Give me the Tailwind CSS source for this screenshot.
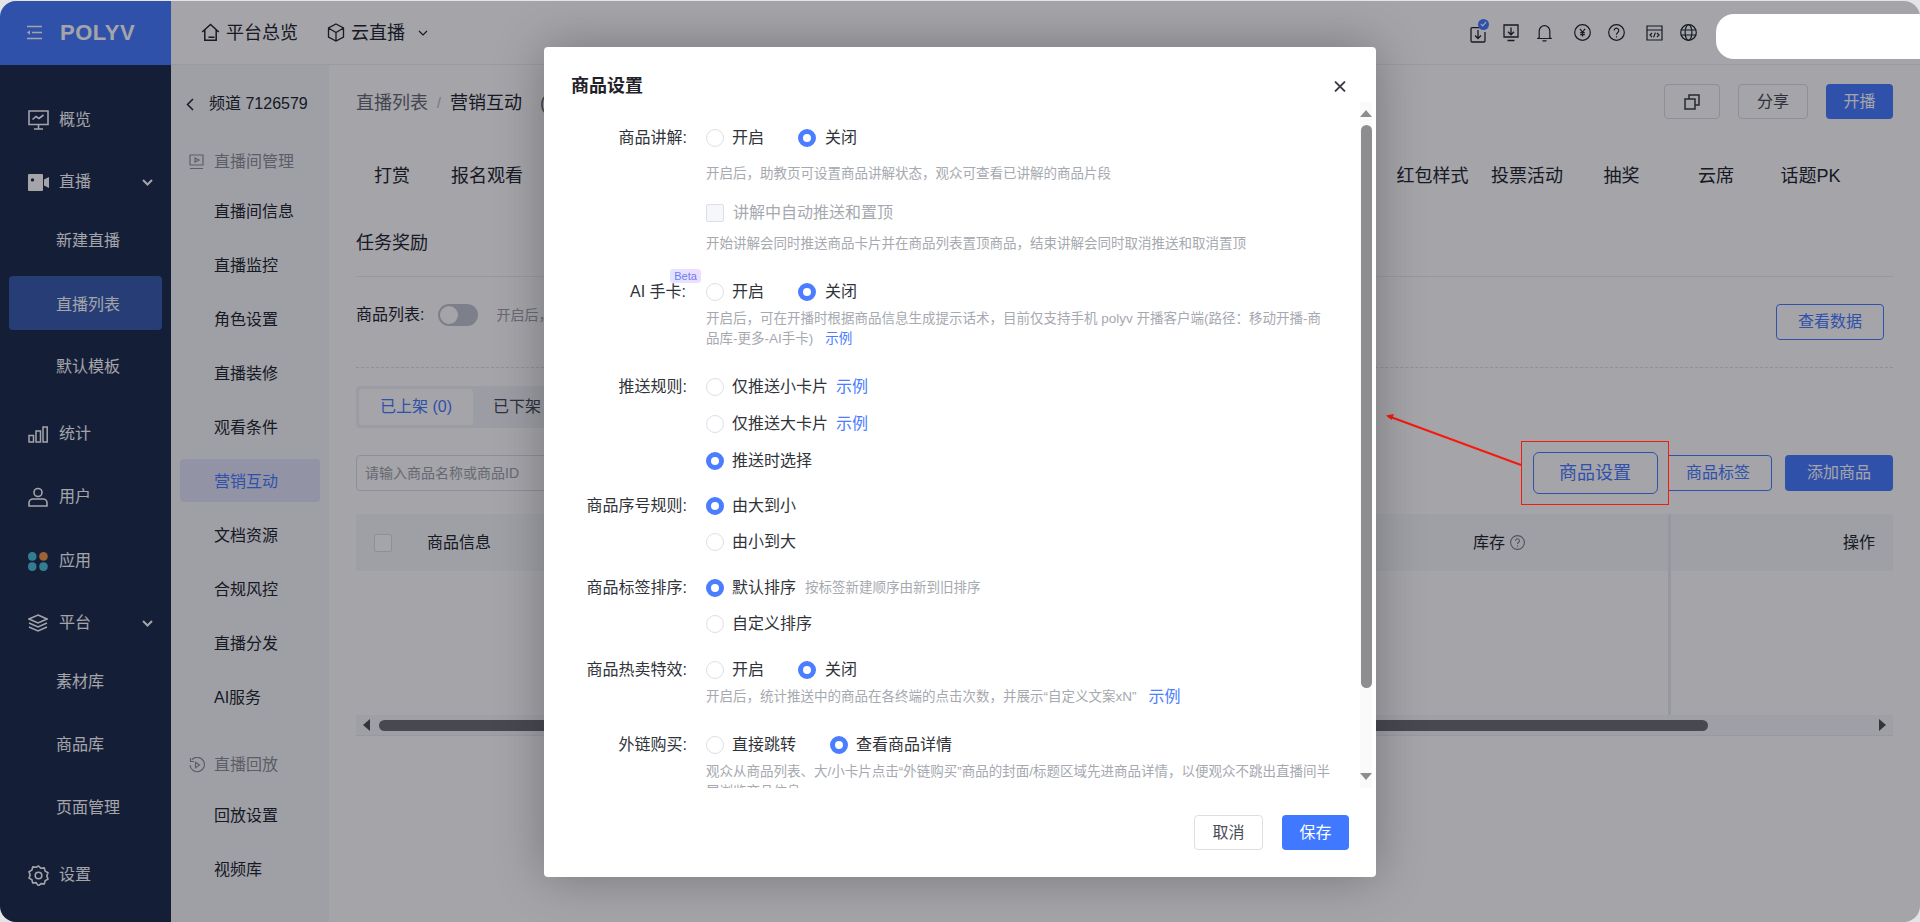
<!DOCTYPE html>
<html lang="zh-CN">
<head>
<meta charset="UTF-8">
<title>商品设置</title>
<script src="https://cdn.jsdelivr.net/npm/@tailwindcss/browser@4"></script>
</head>
<body class="bg-[#e4e4e6] overflow-hidden [font-family:'Liberation_Sans','Noto_Sans_CJK_SC',sans-serif]">
<div class="relative w-[1920px] h-[921px] mt-px overflow-hidden rounded-[16px] bg-white text-[#25282e] flex flex-col">

  <!-- 顶栏 -->
  <header class="h-[64px] shrink-0 flex items-center border-b border-[#f0f1f3]">
    <div class="w-[171px] h-[64px] bg-[#4a7dff] flex items-center pl-[26px] text-white">
      <svg class="w-[17px] h-[15px]" viewBox="0 0 17 15" fill="none" stroke="currentColor" stroke-width="1.6"><path d="M1 1.5h15M6 7.5h10M1 13.5h15"/><path d="M4 5.2 1 7.5l3 2.3z" fill="currentColor" stroke="none"/></svg>
      <span class="ml-[17px] text-[22px] leading-none font-bold tracking-[0.5px]">POLYV</span>
    </div>
    <div class="flex items-center pl-[30px] text-[18px] leading-[24px]">
      <svg class="w-[19px] h-[19px] mr-[6px]" viewBox="0 0 19 19" fill="none" stroke="#25282e" stroke-width="1.5"><path d="M1.2 9 9.5 1.5 17.8 9M3.8 7v10.3h11.4V7M7.5 14.3h6"/></svg>
      <span>平台总览</span>
      <svg class="w-[18px] h-[19px] ml-[29px] mr-[6px]" viewBox="0 0 18 19" fill="none" stroke="#25282e" stroke-width="1.3"><path d="M9 1 16.5 5v9L9 18 1.5 14V5zM1.5 5 9 9.5 16.5 5M9 9.5V18"/></svg>
      <span>云直播</span>
      <svg class="w-[10px] h-[6px] ml-[13px]" viewBox="0 0 10 6" fill="none" stroke="#25282e" stroke-width="1.2"><path d="m1 1 4 4 4-4"/></svg>
    </div>
    <div class="ml-auto mr-[223px] flex items-center text-[#25282e]">
      <span class="relative w-[16px] h-[18px] mt-[2px]">
        <svg class="w-[16px] h-[18px]" viewBox="0 0 16 18" fill="none" stroke="currentColor" stroke-width="1.3"><path d="M10 2.6H2.2a1.2 1.2 0 0 0-1.2 1.2v12a1.2 1.2 0 0 0 1.2 1.2h11.6a1.2 1.2 0 0 0 1.2-1.2V7M8 5v8M5 10.5 8 13.5l3-3"/></svg>
        <span class="absolute -top-[6px] left-[8px] w-[11px] h-[11px] rounded-full bg-[#4a7dff] flex items-center justify-center">
          <svg class="w-[7px] h-[6px]" viewBox="0 0 7 6" fill="none" stroke="#fff" stroke-width="1.2"><path d="m1 3 1.8 1.8L6 1"/></svg>
        </span>
      </span>
      <svg class="w-[16px] h-[18px] ml-[17px]" viewBox="0 0 16 18" fill="none" stroke="currentColor" stroke-width="1.3"><path d="M1 1h14v12H1zM4.5 16.5h7M8 3.5v7M5 7.8l3 3 3-3"/></svg>
      <svg class="w-[15px] h-[18px] ml-[18px]" viewBox="0 0 15 18" fill="none" stroke="currentColor" stroke-width="1.2"><path d="M2.2 13.5V7a5.3 5.3 0 0 1 10.6 0v6.5l1.3 1H.9zM5.5 16.8h4"/></svg>
      <svg class="w-[17px] h-[17px] ml-[22px]" viewBox="0 0 17 17" fill="none" stroke="currentColor" stroke-width="1.2"><circle cx="8.5" cy="8.5" r="7.8"/><path d="m6 4.8 2.5 3.5L11 4.8M8.5 8.3v4.2M6.2 8.7h4.6M6.2 10.7h4.6"/></svg>
      <svg class="w-[17px] h-[17px] ml-[17px]" viewBox="0 0 17 17" fill="none" stroke="currentColor" stroke-width="1.2"><circle cx="8.5" cy="8.5" r="7.8"/><path d="M6.2 6.5a2.3 2.3 0 1 1 3.6 1.9c-.9.6-1.3 1-1.3 2v.4M8.5 12.3v1.3"/></svg>
      <svg class="w-[17px] h-[16px] ml-[21px]" viewBox="0 0 17 16" fill="none" stroke="currentColor" stroke-width="1.2"><path d="M1 1h15v14H1zM1 5h15M6 8 4 10l2 2M11 8l2 2-2 2M9.4 7.6 7.6 12.4"/></svg>
      <svg class="w-[17px] h-[17px] ml-[17px]" viewBox="0 0 17 17" fill="none" stroke="currentColor" stroke-width="1.2"><circle cx="8.5" cy="8.5" r="7.8"/><ellipse cx="8.5" cy="8.5" rx="3.4" ry="7.8"/><path d="M.7 6h15.6M.7 11h15.6"/></svg>
    </div>
  </header>

  <div class="flex-1 flex min-h-0">
    <!-- 主导航 -->
    <nav class="w-[171px] shrink-0 bg-[#1e2e4e] text-white text-[16px] pt-[26px] px-[9px]">
      <div class="h-[54px] pt-[4px] flex items-center pl-[19px]">
        <svg class="w-[21px] h-[20px] mr-[10px]" viewBox="0 0 21 20" fill="none" stroke="currentColor" stroke-width="1.6"><path d="M1 1h19v13.5H1zM10.5 14.5V19M6 19h9M4.5 9.5l3.5-3 3 2 4.5-3.5"/></svg><span>概览</span>
      </div>
      <div class="h-[54px] pt-[4px] mt-[8px] flex items-center pl-[19px]">
        <svg class="w-[21px] h-[17px] mr-[10px]" viewBox="0 0 21 17" fill="currentColor"><path d="M1 0h13a1 1 0 0 1 1 1v15a1 1 0 0 1-1 1H1a1 1 0 0 1-1-1V1a1 1 0 0 1 1-1zm3.5 4.2a1.7 1.7 0 1 0 0 3.4 1.7 1.7 0 0 0 0-3.4zM16 5.5l5-2.5v11l-5-2.500z"/></svg><span>直播</span>
        <svg class="w-[11px] h-[7px] ml-auto mr-[9px]" viewBox="0 0 11 7" fill="none" stroke="currentColor" stroke-width="2"><path d="m1 1 4.500 4.500L10 1"/></svg>
      </div>
      <div class="h-[54px] pt-[4px] mt-[5px] flex items-center pl-[47px]">新建直播</div>
      <div class="h-[54px] pt-[4px] mt-[10px] flex items-center pl-[47px] rounded-[4px] bg-[#3a5fb0]">直播列表</div>
      <div class="h-[54px] pt-[4px] mt-[8px] flex items-center pl-[47px]">默认模板</div>
      <div class="h-[54px] pt-[4px] mt-[13px] flex items-center pl-[19px]">
        <svg class="w-[20px] h-[17px] mr-[11px]" viewBox="0 0 20 17" fill="none" stroke="currentColor" stroke-width="1.5"><path d="M1 9.500h4.500V16H1zM8 5h4.500v11H8zM15 1h4.200v15H15z"/></svg><span>统计</span>
      </div>
      <div class="h-[54px] pt-[4px] mt-[9px] flex items-center pl-[19px]">
        <svg class="w-[20px] h-[20px] mr-[11px]" viewBox="0 0 20 20" fill="none" stroke="currentColor" stroke-width="1.600"><circle cx="10" cy="5.500" r="4"/><path d="M1 19v-3a4 4 0 0 1 4-4h10a4 4 0 0 1 4 4v3z"/></svg><span>用户</span>
      </div>
      <div class="h-[54px] pt-[4px] mt-[10px] flex items-center pl-[19px]">
        <svg class="w-[20px] h-[19px] mr-[11px]" viewBox="0 0 20 19"><path d="M0 4.500A4.200 4.200 0 0 1 4.200 0 4.200 4.200 0 0 1 8.500 4.500c0 2.800-1.500 4.300-4.300 4.300C1.500 8.800 0 7.300 0 4.500z" fill="#4fc3dd"/><circle cx="15.500" cy="4.400" r="4.300" fill="#f29a4a"/><path d="M0 14.500c0-2.800 1.500-4.300 4.200-4.300 2.800 0 4.300 1.500 4.300 4.300S7 19 4.200 19C1.500 19 0 17.300 0 14.500zM11.200 14.500c0-2.800 1.500-4.300 4.300-4.300 2.700 0 4.300 1.500 4.300 4.300S18.200 19 15.500 19c-2.800 0-4.300-1.700-4.300-4.500z" fill="#4fc3dd"/></svg><span>应用</span>
      </div>
      <div class="h-[54px] pt-[4px] mt-[8px] flex items-center pl-[19px]">
        <svg class="w-[20px] h-[18px] mr-[11px]" viewBox="0 0 20 18" fill="none" stroke="currentColor" stroke-width="1.500"><path d="M10 1 19 5l-9 4-9-4zM1 9l9 4 9-4M1 13l9 4 9-4"/></svg><span>平台</span>
        <svg class="w-[11px] h-[7px] ml-auto mr-[9px]" viewBox="0 0 11 7" fill="none" stroke="currentColor" stroke-width="2"><path d="m1 1 4.500 4.500L10 1"/></svg>
      </div>
      <div class="h-[54px] pt-[4px] mt-[5px] flex items-center pl-[47px]">素材库</div>
      <div class="h-[54px] pt-[4px] mt-[9px] flex items-center pl-[47px]">商品库</div>
      <div class="h-[54px] pt-[4px] mt-[9px] flex items-center pl-[47px]">页面管理</div>
      <div class="h-[54px] pt-[4px] mt-[13px] flex items-center pl-[19px]">
        <svg class="w-[21px] h-[21px] mr-[10px]" viewBox="0 0 21 21" fill="none" stroke="currentColor" stroke-width="1.600"><path d="M10.500 1 13 3.300l3.300-.4.800 3.200 2.900 1.700-1.200 3.200 1.200 3.100-2.900 1.700-.8 3.200-3.300-.4-2.500 2.300L8 17.600l-3.300.4-.8-3.200L1 13.100l1.200-3.100L1 6.800l2.900-1.700.8-3.200 3.300.4z" stroke-linejoin="round"/><circle cx="10.500" cy="10.500" r="3.300"/></svg><span>设置</span>
      </div>
    </nav>

    <!-- 频道导航 -->
    <aside class="w-[158px] shrink-0 bg-[#f8f9fb] text-[16px] pt-[16px] px-[9px]">
      <div class="h-[40px] pt-[6px] flex items-center">
        <svg class="w-[8px] h-[13px] ml-[6px]" viewBox="0 0 8 13" fill="none" stroke="#25282e" stroke-width="1.500"><path d="M7 1 1.500 6.500 7 12"/></svg>
        <span class="ml-[15px]">频道 7126579</span>
      </div>
      <div class="h-[43px] pt-[2px] mt-[18px] flex items-center text-[#8f9298]">
        <svg class="w-[15px] h-[16px] ml-[9px] mr-[10px]" viewBox="0 0 15 16" fill="none" stroke="currentColor" stroke-width="1.200"><path d="M1 1h13v10H1zM1 14.500h13M6 4l4 2-4 2z"/></svg><span>直播间管理</span>
      </div>
      <div class="h-[43px] pt-[2px] mt-[7px] flex items-center pl-[34px]">直播间信息</div>
      <div class="h-[43px] pt-[2px] mt-[11px] flex items-center pl-[34px]">直播监控</div>
      <div class="h-[43px] pt-[2px] mt-[11px] flex items-center pl-[34px]">角色设置</div>
      <div class="h-[43px] pt-[2px] mt-[11px] flex items-center pl-[34px]">直播装修</div>
      <div class="h-[43px] pt-[2px] mt-[11px] flex items-center pl-[34px]">观看条件</div>
      <div class="h-[43px] pt-[2px] mt-[11px] flex items-center pl-[34px] rounded-[4px] bg-[#e3e7f9] text-[#4a7dff]">营销互动</div>
      <div class="h-[43px] pt-[2px] mt-[11px] flex items-center pl-[34px]">文档资源</div>
      <div class="h-[43px] pt-[2px] mt-[11px] flex items-center pl-[34px]">合规风控</div>
      <div class="h-[43px] pt-[2px] mt-[11px] flex items-center pl-[34px]">直播分发</div>
      <div class="h-[43px] pt-[2px] mt-[11px] flex items-center pl-[34px]">AI服务</div>
      <div class="h-[43px] pt-[2px] mt-[24px] flex items-center text-[#8f9298]">
        <svg class="w-[16px] h-[16px] ml-[9px] mr-[9px]" viewBox="0 0 16 16" fill="none" stroke="currentColor" stroke-width="1.200"><path d="M3 2.500A7.200 7.200 0 1 1 1 8M1.500 1v3.500H5M6.500 5.300l4 2.700-4 2.700z"/></svg><span>直播回放</span>
      </div>
      <div class="h-[43px] pt-[2px] mt-[8px] flex items-center pl-[34px]">回放设置</div>
      <div class="h-[43px] pt-[2px] mt-[11px] flex items-center pl-[34px]">视频库</div>
    </aside>

    <!-- 内容区 -->
    <main class="flex-1 min-w-0 px-[27px]">
      <div class="h-[73px] flex items-center justify-between text-[18px]">
        <div class="flex items-center mt-[3px]">
          <span class="text-[#6a6d73]">直播列表</span>
          <span class="mx-[9px] text-[14px] text-[#b5b8be]">/</span>
          <span>营销互动</span>
          <span class="ml-[18px] text-[#6a6d73]">(</span>
        </div>
        <div class="flex items-center text-[16px]">
          <button class="w-[56px] h-[35px] rounded-[4px] border border-[#dcdfe6] flex items-center justify-center">
            <svg class="w-[16px] h-[16px]" viewBox="0 0 16 16" fill="none" stroke="#3c3f46" stroke-width="1.500"><path d="M1 5h10v10H1zM5 5V1h10v10h-4"/></svg>
          </button>
          <button class="ml-[18px] w-[70px] h-[35px] rounded-[4px] border border-[#dcdfe6] text-[#4a4d53]">分享</button>
          <button class="ml-[18px] w-[67px] h-[35px] rounded-[4px] bg-[#4a7dff] text-white">开播</button>
        </div>
      </div>

      <div class="-ml-[11px] mt-[18px] h-[40px] flex items-center text-[18px]">
        <span class="w-[94px] text-center">打赏</span>
        <span class="w-[96px] text-center">报名观看</span>
        <span class="w-[850px]"></span>
        <span class="w-[95px] text-center">红包样式</span>
        <span class="w-[94px] text-center">投票活动</span>
        <span class="w-[95px] text-center">抽奖</span>
        <span class="w-[94px] text-center">云席</span>
        <span class="w-[95px] text-center">话题PK</span>
      </div>
      <div class="mt-[27px] h-[40px] flex items-center text-[18px]">任务奖励</div>
      <div class="mt-[13px] border-b border-[#eceef1]"></div>

      <div class="pt-[27px] flex items-start justify-between">
        <div class="h-[22px] flex items-center text-[16px]">
          <span>商品列表:</span>
          <span class="ml-[14px] w-[40px] h-[22px] rounded-full bg-[#c3c7cf] p-[2px]"><span class="block w-[18px] h-[18px] rounded-full bg-white"></span></span>
          <span class="ml-[18px] text-[14px] text-[#a0a3a9]">开启后，观众可在观看页查看商品列表并进行购买</span>
        </div>
        <button class="mr-[9px] w-[108px] h-[36px] rounded-[4px] border border-[#4a7dff] text-[16px] text-[#4a7dff]">查看数据</button>
      </div>

      <div class="mt-[27px] border-b border-dashed border-[#dfe1e5]"></div>

      <div class="mt-[18px] w-[260px] h-[42px] rounded-[4px] bg-[#f3f4f7] p-[3px] flex items-center text-[16px]">
        <span class="w-[114px] h-[36px] rounded-[4px] bg-white text-[#4a7dff] flex items-center justify-center">已上架 (0)</span>
        <span class="ml-[20px] text-[#4a4d53]">已下架 (0)</span>
      </div>

      <div class="mt-[27px] h-[36px] flex items-center justify-between">
        <div class="w-[240px] h-[36px] rounded-[4px] border border-[#dcdfe6] pl-[8px] flex items-center text-[14px] text-[#a0a3a9]">请输入商品名称或商品ID</div>
        <div class="flex items-center text-[16px]">
          <button class="w-[108px] h-[36px] rounded-[4px] border border-[#4a7dff] text-[#4a7dff]">商品标签</button>
          <button class="ml-[13px] w-[108px] h-[36px] rounded-[4px] bg-[#4a7dff] text-white">添加商品</button>
        </div>
      </div>

      <div class="mt-[23px] h-[201px] flex text-[16px]">
        <div class="flex-1 h-[57px] bg-[#f8f9fa] flex items-center">
          <span class="ml-[18px] w-[18px] h-[18px] rounded-[2px] border border-[#dcdfe6] bg-white"></span>
          <span class="ml-[35px]">商品信息</span>
          <span class="ml-auto">库存</span>
          <svg class="ml-[5px] mr-[143px] w-[15px] h-[15px]" viewBox="0 0 15 15" fill="none" stroke="#7d8087" stroke-width="1.100"><circle cx="7.500" cy="7.500" r="6.900"/><path d="M5.500 5.800a2 2 0 1 1 3 1.700c-.7.400-1 .7-1 1.500M7.500 10.300v1.200"/></svg>
        </div>
        <div class="w-[225px] border-l-[3px] border-[#eaecf3]">
          <div class="h-[57px] bg-[#f8f9fa] flex items-center justify-end pr-[18px]">操作</div>
        </div>
      </div>
      <div class="h-[21px] border-b border-[#eceef1] bg-[#f8f9fa] flex items-center">
        <span class="ml-[7px] w-0 h-0 border-y-[6px] border-y-transparent border-r-[7px] border-r-[#505050]"></span>
        <span class="ml-[9px] w-[1329px] h-[11px] rounded-full bg-[#707074]"></span>
        <span class="ml-auto mr-[7px] w-0 h-0 border-y-[6px] border-y-transparent border-l-[7px] border-l-[#505050]"></span>
      </div>
    </main>
  </div>

  <!-- 被标注的按钮 -->
  <div class="absolute left-[1521px] top-[440px] w-[148px] h-[64px] bg-white flex items-center justify-center">
    <button class="w-[125px] h-[42px] rounded-[6px] border border-[#4a7dff] text-[18px] text-[#4a7dff]">商品设置</button>
  </div>

  <!-- 遮罩 -->
  <div class="absolute inset-0 bg-[rgba(2,4,16,0.36)]"></div>

  <!-- 标注 -->
  <div class="absolute left-[1521px] top-[440px] w-[148px] h-[64px] border border-[#f5190f]"></div>
  <svg class="absolute left-[1380px] top-[405px] w-[145px] h-[65px]" viewBox="0 0 145 65" fill="none"><path d="M141 59 8 10" stroke="#f5190f" stroke-width="2"/><path d="m6 9.500 8-1.500-2.400 6z" fill="#f5190f"/></svg>
  <div class="absolute left-[1716px] top-[13px] w-[204px] h-[45px] rounded-l-[18px] bg-white"></div>

  <!-- 商品设置弹窗 -->
  <section class="absolute left-[544px] top-[46px] w-[832px] h-[830px] rounded-[4px] bg-white shadow-[0_0_50px_rgba(0,0,0,0.28)] flex flex-col">
    <div class="h-[55px] shrink-0 flex items-center justify-between pl-[27px] pr-[30px] pt-[24px]">
      <h2 class="text-[18px] font-bold text-[#1f2229]">商品设置</h2>
      <svg class="w-[12px] h-[11px]" viewBox="0 0 12 11" fill="none" stroke="#3c3f46" stroke-width="1.800"><path d="m1 .5 10 10M11 .5l-10 10"/></svg>
    </div>
    <div class="relative h-[686px] shrink-0 overflow-hidden text-[16px] text-[#303339] pt-[21px]">
      <div class="absolute right-[4px] top-0 bottom-0 w-[12px] bg-[#fafafa]">
        <span class="absolute left-0 top-[8px] w-0 h-0 border-x-[6px] border-x-transparent border-b-[7px] border-b-[#8d8d8f]"></span>
        <span class="absolute left-[0.5px] top-[23px] w-[11px] h-[563px] rounded-full bg-[#8d8d8f]"></span>
        <span class="absolute left-0 top-[671px] w-0 h-0 border-x-[6px] border-x-transparent border-t-[7px] border-t-[#8d8d8f]"></span>
      </div>

      <div class="flex">
        <div class="w-[143px] h-[30px] text-right leading-[30px]">商品讲解:</div>
        <div class="ml-[19px]">
          <div class="h-[30px] flex items-center">
            <span class="w-[18px] h-[18px] rounded-full border border-[#dcdfe6]"></span><span class="ml-[8px] w-[34px]">开启</span>
            <span class="ml-[32px] w-[18px] h-[18px] rounded-full border-[5px] border-[#4a7dff]"></span><span class="ml-[9px]">关闭</span>
          </div>
          <p class="mt-[11px] h-[20px] leading-[20px] text-[13.5px] text-[#a6a9af]">开启后，助教页可设置商品讲解状态，观众可查看已讲解的商品片段</p>
          <div class="mt-[14px] h-[30px] flex items-center text-[#a6a9af]">
            <span class="w-[18px] h-[18px] rounded-[2px] border border-[#dcdfe6] bg-[#f5f7fa]"></span><span class="ml-[9px]">讲解中自动推送和置顶</span>
          </div>
          <p class="mt-[6px] h-[20px] leading-[20px] text-[13.5px] text-[#a6a9af]">开始讲解会同时推送商品卡片并在商品列表置顶商品，结束讲解会同时取消推送和取消置顶</p>
        </div>
      </div>

      <div class="flex mt-[23px]">
        <div class="relative w-[143px] pr-[1px] h-[30px] text-right leading-[30px]">
          AI 手卡:
          <span class="absolute right-[-14px] top-[-8px] w-[31px] h-[14px] rounded-[3px] bg-gradient-to-r from-[#dfe6ff] to-[#f0dcff] text-[11px] leading-[14px] text-center text-[#6d7cf5]">Beta</span>
        </div>
        <div class="ml-[19px]">
          <div class="h-[30px] flex items-center">
            <span class="w-[18px] h-[18px] rounded-full border border-[#dcdfe6]"></span><span class="ml-[8px] w-[34px]">开启</span>
            <span class="ml-[32px] w-[18px] h-[18px] rounded-full border-[5px] border-[#4a7dff]"></span><span class="ml-[9px]">关闭</span>
          </div>
          <p class="mt-[2px] leading-[20px] text-[13.5px] text-[#a6a9af]">开启后，可在开播时根据商品信息生成提示话术，目前仅支持手机 polyv 开播客户端(路径：移动开播-商<br>品库-更多-AI手卡)<span class="ml-[12px] text-[#4a7dff]">示例</span></p>
        </div>
      </div>

      <div class="flex mt-[23px]">
        <div class="w-[143px] h-[30px] text-right leading-[30px]">推送规则:</div>
        <div class="ml-[19px]">
          <div class="h-[30px] flex items-center">
            <span class="w-[18px] h-[18px] rounded-full border border-[#dcdfe6]"></span><span class="ml-[8px]">仅推送小卡片</span><span class="ml-[8px] text-[#4a7dff]">示例</span>
          </div>
          <div class="mt-[7px] h-[30px] flex items-center">
            <span class="w-[18px] h-[18px] rounded-full border border-[#dcdfe6]"></span><span class="ml-[8px]">仅推送大卡片</span><span class="ml-[8px] text-[#4a7dff]">示例</span>
          </div>
          <div class="mt-[7px] h-[30px] flex items-center">
            <span class="w-[18px] h-[18px] rounded-full border-[5px] border-[#4a7dff]"></span><span class="ml-[8px]">推送时选择</span>
          </div>
        </div>
      </div>

      <div class="flex mt-[15px]">
        <div class="w-[143px] h-[30px] text-right leading-[30px]">商品序号规则:</div>
        <div class="ml-[19px]">
          <div class="h-[30px] flex items-center">
            <span class="w-[18px] h-[18px] rounded-full border-[5px] border-[#4a7dff]"></span><span class="ml-[8px]">由大到小</span>
          </div>
          <div class="mt-[6px] h-[30px] flex items-center">
            <span class="w-[18px] h-[18px] rounded-full border border-[#dcdfe6]"></span><span class="ml-[8px]">由小到大</span>
          </div>
        </div>
      </div>

      <div class="flex mt-[16px]">
        <div class="w-[143px] h-[30px] text-right leading-[30px]">商品标签排序:</div>
        <div class="ml-[19px]">
          <div class="h-[30px] flex items-center">
            <span class="w-[18px] h-[18px] rounded-full border-[5px] border-[#4a7dff]"></span><span class="ml-[8px]">默认排序</span><span class="ml-[9px] text-[13.5px] text-[#a6a9af]">按标签新建顺序由新到旧排序</span>
          </div>
          <div class="mt-[6px] h-[30px] flex items-center">
            <span class="w-[18px] h-[18px] rounded-full border border-[#dcdfe6]"></span><span class="ml-[8px]">自定义排序</span>
          </div>
        </div>
      </div>

      <div class="flex mt-[16px]">
        <div class="w-[143px] h-[30px] text-right leading-[30px]">商品热卖特效:</div>
        <div class="ml-[19px]">
          <div class="h-[30px] flex items-center">
            <span class="w-[18px] h-[18px] rounded-full border border-[#dcdfe6]"></span><span class="ml-[8px] w-[34px]">开启</span>
            <span class="ml-[32px] w-[18px] h-[18px] rounded-full border-[5px] border-[#4a7dff]"></span><span class="ml-[9px]">关闭</span>
          </div>
          <p class="mt-[2px] h-[20px] flex items-center text-[13.5px] text-[#a6a9af]">开启后，统计推送中的商品在各终端的点击次数，并展示“自定义文案xN”<span class="ml-[12px] text-[16px] text-[#4a7dff]">示例</span></p>
        </div>
      </div>

      <div class="flex mt-[23px]">
        <div class="w-[143px] h-[30px] text-right leading-[30px]">外链购买:</div>
        <div class="ml-[19px]">
          <div class="h-[30px] flex items-center">
            <span class="w-[18px] h-[18px] rounded-full border border-[#dcdfe6]"></span><span class="ml-[8px]">直接跳转</span>
            <span class="ml-[34px] w-[18px] h-[18px] rounded-full border-[5px] border-[#4a7dff]"></span><span class="ml-[8px]">查看商品详情</span>
          </div>
          <p class="mt-[2px] leading-[20px] text-[13.5px] text-[#a6a9af]">观众从商品列表、大/小卡片点击“外链购买”商品的封面/标题区域先进商品详情，以便观众不跳出直播间半<br>屏浏览商品信息</p>
        </div>
      </div>
    </div>
    <div class="flex-1 flex items-start justify-end pt-[27px] pr-[27px] text-[16px]">
      <button class="w-[69px] h-[35px] rounded-[4px] border border-[#dcdfe6] text-[#4a4d53]">取消</button>
      <button class="ml-[19px] w-[67px] h-[35px] rounded-[4px] bg-[#4079ff] text-white">保存</button>
    </div>
  </section>
</div>
</body>
</html>
